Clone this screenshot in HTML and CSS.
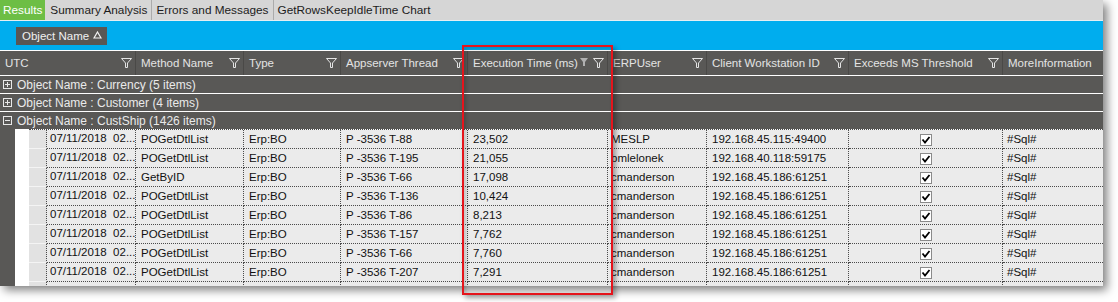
FILE: index.html
```html
<!DOCTYPE html>
<html lang="en">
<head>
  <title>Trace Results</title>
  <meta charset="utf-8">
  <link rel="stylesheet" href="styles.css">
</head>
<body>

  <div class="shot">
    <div class="window">
      <div class="tabs">
        <span class="tab active">Results</span>
        <span class="tab">Summary Analysis</span>
        <span class="tab sep">Errors and Messages</span>
        <span class="tab sep">GetRowsKeepIdleTime Chart</span>
      </div>

      <div class="groupbar">
        <span class="chip">Object Name
          <svg width="9" height="8" viewBox="0 0 9 8"><path d="M4.5 1 L8 7 H1 Z" fill="none" stroke="#f2f2f2" stroke-width="1.2"/></svg>
        </span>
      </div>

      <div class="header">
        <div class="hcell">UTC <i class="funnel"></i></div>
        <div class="hcell">Method Name <i class="funnel"></i></div>
        <div class="hcell">Type <i class="funnel"></i></div>
        <div class="hcell">Appserver Thread <i class="funnel"></i></div>
        <div class="hcell">Execution Time (ms) <span class="icons"><i class="sorted"></i><i class="funnel"></i></span></div>
        <div class="hcell">ERPUser <i class="funnel"></i></div>
        <div class="hcell">Client Workstation ID <i class="funnel"></i></div>
        <div class="hcell">Exceeds MS Threshold <i class="funnel"></i></div>
        <div class="hcell">MoreInformation</div>
      </div>

      <div class="group"><i class="toggle plus"></i>Object Name : Currency (5 items)</div>
      <div class="group"><i class="toggle plus"></i>Object Name : Customer (4 items)</div>
      <div class="group open"><i class="toggle"></i>Object Name : CustShip (1426 items)</div>

      <div class="group-body">
        <div class="rows">
          <div class="row"><span class="sel"></span><span class="c utc">07/11/2018&nbsp; 02...</span><span class="c">POGetDtlList</span><span class="c">Erp:BO</span><span class="c">P -3536 T-88</span><span class="c">23,502</span><span class="c user">MESLP</span><span class="c">192.168.45.115:49400</span><span class="c check"><i class="box"></i></span><span class="c">#Sql#</span></div>
          <div class="row"><span class="sel"></span><span class="c utc">07/11/2018&nbsp; 02...</span><span class="c">POGetDtlList</span><span class="c">Erp:BO</span><span class="c">P -3536 T-195</span><span class="c">21,055</span><span class="c user">bmlelonek</span><span class="c">192.168.40.118:59175</span><span class="c check"><i class="box"></i></span><span class="c">#Sql#</span></div>
          <div class="row"><span class="sel"></span><span class="c utc">07/11/2018&nbsp; 02...</span><span class="c">GetByID</span><span class="c">Erp:BO</span><span class="c">P -3536 T-66</span><span class="c">17,098</span><span class="c user">cmanderson</span><span class="c">192.168.45.186:61251</span><span class="c check"><i class="box"></i></span><span class="c">#Sql#</span></div>
          <div class="row"><span class="sel"></span><span class="c utc">07/11/2018&nbsp; 02...</span><span class="c">POGetDtlList</span><span class="c">Erp:BO</span><span class="c">P -3536 T-136</span><span class="c">10,424</span><span class="c user">cmanderson</span><span class="c">192.168.45.186:61251</span><span class="c check"><i class="box"></i></span><span class="c">#Sql#</span></div>
          <div class="row"><span class="sel"></span><span class="c utc">07/11/2018&nbsp; 02...</span><span class="c">POGetDtlList</span><span class="c">Erp:BO</span><span class="c">P -3536 T-86</span><span class="c">8,213</span><span class="c user">cmanderson</span><span class="c">192.168.45.186:61251</span><span class="c check"><i class="box"></i></span><span class="c">#Sql#</span></div>
          <div class="row"><span class="sel"></span><span class="c utc">07/11/2018&nbsp; 02...</span><span class="c">POGetDtlList</span><span class="c">Erp:BO</span><span class="c">P -3536 T-157</span><span class="c">7,762</span><span class="c user">cmanderson</span><span class="c">192.168.45.186:61251</span><span class="c check"><i class="box"></i></span><span class="c">#Sql#</span></div>
          <div class="row"><span class="sel"></span><span class="c utc">07/11/2018&nbsp; 02...</span><span class="c">POGetDtlList</span><span class="c">Erp:BO</span><span class="c">P -3536 T-66</span><span class="c">7,760</span><span class="c user">cmanderson</span><span class="c">192.168.45.186:61251</span><span class="c check"><i class="box"></i></span><span class="c">#Sql#</span></div>
          <div class="row"><span class="sel"></span><span class="c utc">07/11/2018&nbsp; 02...</span><span class="c">POGetDtlList</span><span class="c">Erp:BO</span><span class="c">P -3536 T-207</span><span class="c">7,291</span><span class="c user">cmanderson</span><span class="c">192.168.45.186:61251</span><span class="c check"><i class="box"></i></span><span class="c">#Sql#</span></div>
          <div class="row"><span class="sel"></span><span class="c utc">07/11/2018&nbsp; 02...</span><span class="c">POGetDtlList</span><span class="c">Erp:BO</span><span class="c">P -3536 T-208</span><span class="c">7,237</span><span class="c user">cmanderson</span><span class="c">192.168.45.186:61251</span><span class="c check"><i class="box"></i></span><span class="c">#Sql#</span></div>
        </div>
      </div>
    </div>

    <div class="callout"></div>
  </div>

</body>
</html>
```

FILE: styles.css
```css
*, *::before, *::after {
  margin: 0;
  padding: 0;
  box-sizing: border-box;
}

body {
  background-color: #FFFFFF;
  font-family: "Liberation Sans", Arial, sans-serif;
  font-size: 11.5px;
  color: #111111;
}

.shot {
  position: relative;
  width: 1118px;
  height: 302px;
}

.window {
  width: 1103px;
  height: 286px;
  overflow: hidden;
  background-color: #FFFFFF;
  box-shadow: 4px 4px 9px rgb(0 0 0 / 0.5);
}

/* tabs */

.tabs {
  display: flex;
  height: 21px;
  background-color: #D6D6D6;
  border-bottom: 1px solid #E6EEF2;
}

.tab {
  display: flex;
  align-items: center;
  height: 20px;
  padding: 0 4px 0 5px;
  color: #1C1C1C;
  font-size: 11.8px;
}

.tab.active {
  padding: 0 3px;
  color: #FFFFFF;
  background-color: #6DBE45;
}

.tab.sep {
  border-left: 1px solid #ABABAB;
  padding-left: 4px;
}

/* group-by bar */

.groupbar {
  height: 30px;
  padding: 6px 0 0 16px;
  background-color: #00ADEE;
  border-bottom: 1px solid #FFFFFF;
}

.chip {
  display: inline-flex;
  align-items: center;
  gap: 4px;
  height: 18px;
  padding: 0 5px 0 6px;
  color: #F0F0F0;
  font-size: 11.5px;
  background-color: #595755;
}

.chip svg {
  margin-top: -3px;
}

/* column header */

.header {
  display: grid;
  grid-template-columns: 136px 108px 97px 127px 140px 99px 142px 154px 100px;
  height: 25px;
  background-color: #595856;
  border-bottom: 1px solid #FFFFFF;
}

.hcell {
  display: flex;
  align-items: center;
  justify-content: space-between;
  padding: 0 3px 0 5px;
  color: #E4E4E4;
  font-size: 11.5px;
  border-right: 1px solid #4A4947;
  white-space: nowrap;
}

.hcell:last-child {
  border-right: 0;
}

.icons {
  display: flex;
  align-items: center;
  gap: 5px;
}

.funnel {
  width: 11px;
  height: 10px;
  background: url("data:image/svg+xml,%3Csvg xmlns='http://www.w3.org/2000/svg' width='11' height='10'%3E%3Cpath d='M0.5 0.5 H10.5 L6.5 5 V9.5 H4.5 V5 Z' fill='none' stroke='%23E4E4E4'/%3E%3C/svg%3E") no-repeat;
}

.sorted {
  width: 8px;
  height: 8px;
  margin-top: -3px;
  background: url("data:image/svg+xml,%3Csvg xmlns='http://www.w3.org/2000/svg' width='8' height='8'%3E%3Cpath d='M0 0 H8 L5 4 V8 H3 V4 Z' fill='%23B0B0B0'/%3E%3C/svg%3E") no-repeat;
}

/* group rows */

.group {
  display: flex;
  align-items: center;
  gap: 5px;
  height: 18px;
  padding-left: 3px;
  color: #EAEAEA;
  font-size: 12px;
  background-color: #595856;
  border-bottom: 1px solid #FFFFFF;
}

.group.open {
  height: 17px;
  border-bottom: 0;
}

.toggle {
  position: relative;
  width: 9px;
  height: 9px;
  border: 1px solid #E8E8E8;
}

.toggle::before,
.plus::after {
  content: "";
  position: absolute;
  background-color: #E8E8E8;
}

.toggle::before {
  left: 1px;
  right: 1px;
  top: 3px;
  height: 1px;
}

.plus::after {
  top: 1px;
  bottom: 1px;
  left: 3px;
  width: 1px;
}

/* data rows */

.group-body {
  height: 200px;
  padding-left: 29px;
  background: linear-gradient(to right, #595856 15px, #FFFFFF 15px);
}

.rows {
  border-top: 1px dotted #4A4A4A;
}

.row {
  display: grid;
  grid-template-columns: 18px 89px 108px 97px 127px 140px 99px 142px 154px 100px;
  height: 19px;
  background-color: #EBEBEB;
}

.sel {
  background-color: #E2E2E2;
  border-bottom: 1px solid #F4F4F4;
  border-right: 1px dotted #4A4A4A;
}

.c {
  display: flex;
  align-items: center;
  padding: 0 0 1px 5px;
  white-space: nowrap;
  overflow: hidden;
  border-right: 1px dotted #4A4A4A;
  border-bottom: 1px dotted #4A4A4A;
}

.c:last-child {
  padding-left: 4px;
  border-right: 0;
}

.c.utc {
  padding: 0 0 3px 3px;
}

.c.user {
  padding-left: 3px;
}

.c.check {
  justify-content: center;
  padding: 1px 0 0;
}

.box {
  width: 12px;
  height: 12px;
  border: 1px solid #8A8A8A;
  background: #FFFFFF url("data:image/svg+xml,%3Csvg xmlns='http://www.w3.org/2000/svg' width='10' height='10'%3E%3Cpath d='M1.5 4.5 L4 7.5 L8.5 2' fill='none' stroke='%23000' stroke-width='1.8'/%3E%3C/svg%3E") no-repeat center;
}

/* highlight frame drawn over the screenshot */

.callout {
  position: absolute;
  left: 462px;
  top: 45px;
  width: 151px;
  height: 250px;
  border: 2px solid #E5141C;
  box-shadow: 3px 3px 5px rgb(0 0 0 / 0.35), inset 2px 2px 4px rgb(0 0 0 / 0.2);
}
```
